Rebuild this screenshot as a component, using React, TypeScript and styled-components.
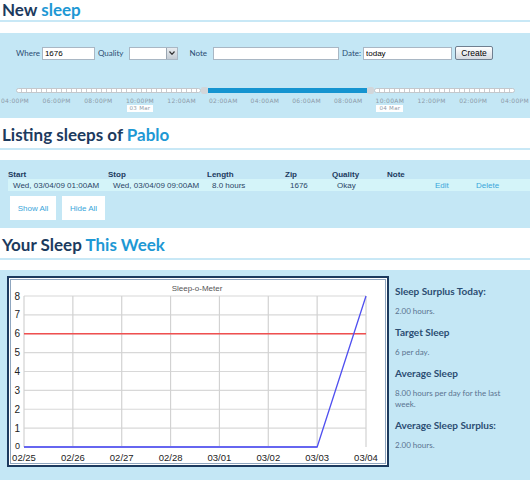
import React from 'react'
import styled, { createGlobalStyle } from 'styled-components'

const GlobalStyle = createGlobalStyle`
  html, body {
    margin: 0;
    padding: 0;
    background: #ffffff;
    width: 530px;
    overflow: hidden;
  }
  body {
    font-family: 'Liberation Sans', Arial, sans-serif;
  }
`

const NAVY = '#1c3a5e'
const SKY = '#1e98d4'
const PANEL = '#c4e7f5'

const Page = styled.div`
  width: 530px;
  display: flex;
  flex-direction: column;
`

const Heading = styled.h2<{ $first?: boolean }>`
  margin: 0;
  padding: ${({ $first }) => ($first ? '0' : '2px')} 0 0 2px;
  height: ${({ $first }) => ($first ? 20 : 26)}px;
  font-family: 'Lato', 'Open Sans', sans-serif;
  font-weight: 700;
  font-size: 17px;
  line-height: ${({ $first }) => ($first ? 20 : 26)}px;
  color: ${NAVY};
  border-bottom: 2px solid #c8e8f6;
  margin-bottom: ${({ $first }) => ($first ? 11 : 10)}px;
  span {
    color: ${SKY};
  }
`

const Panel = styled.div<{ $h: number }>`
  background: ${PANEL};
  height: ${({ $h }) => $h}px;
  margin-bottom: 2px;
  box-sizing: border-box;
  overflow: hidden;
`

/* ---------- new sleep form ---------- */

const FormRow = styled.div`
  display: flex;
  align-items: center;
  height: 14px;
  padding: 13px 0 0 16px;
`

const Label = styled.label<{ $ml?: number; $mr?: number }>`
  font-family: 'Lato', sans-serif;
  font-size: 8px;
  color: #2b4d72;
  margin-left: ${({ $ml }) => $ml ?? 0}px;
  margin-right: ${({ $mr }) => $mr ?? 2}px;
`

const TextInput = styled.input<{ $w: number }>`
  width: ${({ $w }) => $w}px;
  height: 13px;
  box-sizing: border-box;
  border: 1px solid #a9b7c4;
  background: #fff;
  font-family: 'Liberation Sans', Arial, sans-serif;
  font-size: 8px;
  padding: 0 2px;
  margin: 0;
  color: #000;
  outline: none;
`

const Select = styled.div`
  width: 49px;
  height: 13px;
  box-sizing: border-box;
  border: 1px solid #a9b7c4;
  background: #fff;
  margin-left: 3px;
  display: flex;
  justify-content: flex-end;
`

const SelectArrow = styled.div`
  width: 10px;
  height: 11px;
  background: linear-gradient(#e8ecf0, #c4ccd4);
  border-left: 1px solid #9aa6b2;
  display: flex;
  align-items: center;
  justify-content: center;
`

const CreateButton = styled.button`
  margin-left: 3px;
  width: 38px;
  height: 14px;
  padding: 0;
  border: 1px solid #6f7f90;
  border-radius: 2px;
  background: linear-gradient(#ffffff, #d6dbe1);
  font-family: 'Liberation Sans', Arial, sans-serif;
  font-size: 8.5px;
  color: #000;
`

const Slider = styled.div`
  display: flex;
  align-items: center;
  margin: 27px 15px 0 16px;
  height: 7px;
`

const Dots = styled.div<{ $w?: number }>`
  ${({ $w }) => ($w ? `width: ${$w}px;` : 'flex: 1;')}
  height: 5px;
  box-sizing: border-box;
  border: 1px solid #c4c8cc;
  border-radius: 3px;
  background: repeating-linear-gradient(to right, #ffffff 0 4px, #c8ccd0 4px 5px);
`

const Handle = styled.div`
  width: 7px;
  height: 7px;
  border-radius: 2px;
  background: #d2d6da;
`

const Fill = styled.div<{ $w: number }>`
  width: ${({ $w }) => $w}px;
  height: 5px;
  background: #1594d0;
`

const Scale = styled.div<{ $mt: number }>`
  display: flex;
  justify-content: space-between;
  margin-top: ${({ $mt }) => $mt}px;
`

const Tick = styled.span`
  width: 30px;
  text-align: center;
  font-family: 'DejaVu Sans', sans-serif;
  font-size: 6px;
  letter-spacing: 0.3px;
  color: #8d9aa8;
  white-space: nowrap;
`

const Badge = styled.span<{ $show?: boolean }>`
  width: 30px;
  display: flex;
  justify-content: center;
  visibility: ${({ $show }) => ($show ? 'visible' : 'hidden')};
  span {
    background: #fff;
    padding: 0 3px;
    font-family: 'DejaVu Sans', sans-serif;
    font-size: 5.5px;
    line-height: 7px;
    letter-spacing: 0.3px;
    color: #8d9aa8;
  }
`

/* ---------- listing ---------- */

const COLS = '100px 99px 78px 47px 55px 43px 41px 51px'

const TableHead = styled.div`
  display: grid;
  grid-template-columns: ${COLS};
  margin: 9px 0 0 8px;
  height: 10px;
  align-items: center;
`

const HeadCell = styled.span`
  font-size: 8px;
  font-weight: 700;
  color: ${NAVY};
`

const TableRow = styled.div`
  display: grid;
  grid-template-columns: ${COLS};
  margin: 0 0 0 8px;
  height: 12px;
  align-items: center;
  background: #d4f4f9;
`

const Cell = styled.span<{ $link?: boolean }>`
  padding-left: 5px;
  font-size: 8px;
  color: ${({ $link }) => ($link ? '#3aa6da' : '#2b4566')};
  white-space: nowrap;
`

const ButtonRow = styled.div`
  display: flex;
  gap: 6px;
  margin: 5px 0 0 10px;
`

const BoxButton = styled.div<{ $w: number }>`
  width: ${({ $w }) => $w}px;
  height: 24px;
  background: #fff;
  display: flex;
  align-items: center;
  justify-content: center;
  font-size: 8px;
  color: #3aa6da;
`

/* ---------- week ---------- */

const WeekBody = styled.div`
  display: flex;
  padding: 6px 0 0 7px;
  gap: 6px;
`

const ChartBox = styled.div`
  width: 382px;
  height: 191px;
  box-sizing: border-box;
  background: #fff;
  border: 2px solid ${NAVY};
  box-shadow: inset 0 0 0 1px #fff, inset 0 0 0 2px #8fa6bf;
`

const Stats = styled.div`
  display: flex;
  flex-direction: column;
  width: 112px;
  padding-top: 8px;
`

const StatTitle = styled.div`
  font-family: 'Lato', sans-serif;
  font-weight: 700;
  font-size: 10px;
  color: #2b4d72;
  height: 14px;
  line-height: 14px;
`

const StatValue = styled.div`
  font-family: 'Lato', sans-serif;
  font-size: 8px;
  color: #5a7390;
  line-height: 11px;
  margin: 8px 0;
`

const times = [
  '04:00PM', '06:00PM', '08:00PM', '10:00PM', '12:00AM', '02:00AM', '04:00AM',
  '06:00AM', '08:00AM', '10:00AM', '12:00PM', '02:00PM', '04:00PM',
]

const days = ['02/25', '02/26', '02/27', '02/28', '03/01', '03/02', '03/03', '03/04']

function SleepChart() {
  // plot area, in svg coordinates
  const x0 = 15
  const x1 = 357
  const yTop = 18
  const yBot = 169
  const step = (x1 - x0) / 7
  const yAt = (v: number) => yBot - ((yBot - yTop) * v) / 8
  return (
    <svg width="378" height="187" viewBox="0 0 378 187">
      <text x="188" y="13" fontSize="8" fill="#555" textAnchor="middle" fontFamily="Liberation Sans, Arial">
        Sleep-o-Meter
      </text>
      {Array.from({ length: 8 }, (_, i) => (
        <line key={'h' + i} x1={x0} x2={x1} y1={yAt(i + 1)} y2={yAt(i + 1)} stroke="#d8d8d8" strokeWidth="1.2" />
      ))}
      {days.map((_, i) => (
        <line key={'v' + i} x1={x0 + step * i} x2={x0 + step * i} y1={yTop} y2={yBot} stroke="#d2d2d2" strokeWidth="1.2" />
      ))}
      {Array.from({ length: 9 }, (_, i) => (
        <text key={'y' + i} x="11" y={yAt(i) + (i === 0 ? 1.5 : 3.5)} fontSize={i === 0 ? 9 : 10} fill="#222" textAnchor="end" fontFamily="Liberation Sans, Arial">
          {i}
        </text>
      ))}
      {days.map((d, i) => (
        <text key={'d' + i} x={x0 + step * i} y="183" fontSize="9.5" fill="#222" textAnchor="middle" fontFamily="Liberation Sans, Arial">
          {d}
        </text>
      ))}
      <line x1={x0} x2={x1} y1={yAt(6)} y2={yAt(6)} stroke="#f05050" strokeWidth="1.3" />
      <line x1={x0} x2={x0 + step * 6} y1={yBot} y2={yBot} stroke="#a8a8f0" strokeWidth="2" />
      <polyline
        points={`${x0},${yBot} ${x0 + step * 6},${yBot} ${x1},${yAt(8)}`}
        fill="none"
        stroke="#5050f0"
        strokeWidth="1.3"
      />
    </svg>
  )
}

export default function App() {
  return (
    <Page>
      <GlobalStyle />
      <Heading $first>
        New <span>sleep</span>
      </Heading>
      <Panel $h={85}>
        <FormRow>
          <Label>Where</Label>
          <TextInput $w={53} defaultValue="1676" />
          <Label $ml={3}>Quality</Label>
          <Select>
            <SelectArrow>
              <svg width="6" height="4" viewBox="0 0 6 4">
                <path d="M0.5 0.5 L3 3.3 L5.5 0.5" fill="none" stroke="#333" strokeWidth="1.2" />
              </svg>
            </SelectArrow>
          </Select>
          <Label $ml={12} $mr={6}>Note</Label>
          <TextInput $w={126} />
          <Label $ml={3}>Date:</Label>
          <TextInput $w={89} defaultValue="today" />
          <CreateButton>Create</CreateButton>
        </FormRow>
        <Slider>
          <Dots $w={185} />
          <Handle />
          <Fill $w={159} />
          <Handle />
          <Dots />
        </Slider>
        <Scale $mt={3}>
          {times.map((t, i) => (
            <Tick key={i}>{t}</Tick>
          ))}
        </Scale>
        <Scale $mt={1}>
          {times.map((_, i) => (
            <Badge key={i} $show={i === 3 || i === 9}>
              <span>{i === 3 ? '03 Mar' : '04 Mar'}</span>
            </Badge>
          ))}
        </Scale>
      </Panel>
      <Heading>
        Listing sleeps of <span>Pablo</span>
      </Heading>
      <Panel $h={68}>
        <TableHead>
          <HeadCell>Start</HeadCell>
          <HeadCell>Stop</HeadCell>
          <HeadCell>Length</HeadCell>
          <HeadCell>Zip</HeadCell>
          <HeadCell>Quality</HeadCell>
          <HeadCell>Note</HeadCell>
          <HeadCell />
          <HeadCell />
        </TableHead>
        <TableRow>
          <Cell>Wed, 03/04/09 01:00AM</Cell>
          <Cell>Wed, 03/04/09 09:00AM</Cell>
          <Cell>8.0 hours</Cell>
          <Cell>1676</Cell>
          <Cell>Okay</Cell>
          <Cell />
          <Cell $link>Edit</Cell>
          <Cell $link>Delete</Cell>
        </TableRow>
        <ButtonRow>
          <BoxButton $w={46}>Show All</BoxButton>
          <BoxButton $w={43}>Hide All</BoxButton>
        </ButtonRow>
      </Panel>
      <Heading>
        Your Sleep <span>This Week</span>
      </Heading>
      <Panel $h={220}>
        <WeekBody>
          <ChartBox>
            <SleepChart />
          </ChartBox>
          <Stats>
            <StatTitle>Sleep Surplus Today:</StatTitle>
            <StatValue>2.00 hours.</StatValue>
            <StatTitle>Target Sleep</StatTitle>
            <StatValue>6 per day.</StatValue>
            <StatTitle>Average Sleep</StatTitle>
            <StatValue>8.00 hours per day for the last week.</StatValue>
            <StatTitle>Average Sleep Surplus:</StatTitle>
            <StatValue>2.00 hours.</StatValue>
          </Stats>
        </WeekBody>
      </Panel>
    </Page>
  )
}
